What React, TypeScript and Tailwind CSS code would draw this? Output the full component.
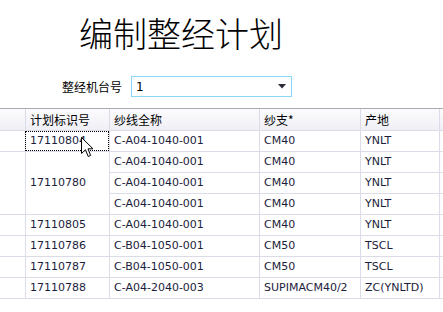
import React from "react";

type Group = { id: string; items: string[][] };

const groups: Group[] = [
  { id: "17110804", items: [["C-A04-1040-001", "CM40", "YNLT"]] },
  {
    id: "17110780",
    items: [
      ["C-A04-1040-001", "CM40", "YNLT"],
      ["C-A04-1040-001", "CM40", "YNLT"],
      ["C-A04-1040-001", "CM40", "YNLT"],
    ],
  },
  { id: "17110805", items: [["C-A04-1040-001", "CM40", "YNLT"]] },
  { id: "17110786", items: [["C-B04-1050-001", "CM50", "TSCL"]] },
  { id: "17110787", items: [["C-B04-1050-001", "CM50", "TSCL"]] },
  { id: "17110788", items: [["C-A04-2040-003", "SUPIMACM40/2", "ZC(YNLTD)"]] },
];

const cjk = "font-['Noto_Sans_CJK_SC',sans-serif]";
const latin = "font-['DejaVu_Sans','Noto_Sans_CJK_SC',sans-serif]";
const cell = "border-r border-b border-[#dcdce8] flex items-center pl-[4px] whitespace-nowrap overflow-hidden";

const Cursor = () => (
  <svg width="13" height="21" viewBox="0 0 13 21" className="absolute left-[55px] top-[6px]">
    <path d="M0.5 0.5 L0.5 16.5 L4.5 12.8 L7.2 19.5 L9.6 18.5 L7 11.8 L12 11.8 Z" fill="#fff" stroke="#000" strokeWidth="1" strokeLinejoin="miter" />
  </svg>
);

export default function App() {
  return (
    <div className="w-[443px] h-[312px] bg-white overflow-hidden text-black">
      {/* title */}
      <div className={`pt-[16px] pl-[79px] text-[34px] leading-[33px] font-light ${cjk}`}>编制整经计划</div>

      {/* machine no */}
      <div className="flex items-center mt-[27px] pl-[62px]">
        <span className={`text-[12px] ${cjk}`}>整经机台号</span>
        <div className="ml-[9px] w-[161px] h-[21px] border border-[#87d7f5] flex items-center justify-between pl-[4px] pr-[5px]">
          <span className={`text-[12px] ${latin}`}>1</span>
          <svg width="8" height="5" viewBox="0 0 8 5">
            <path d="M0 0 H8 L4 4.5 Z" fill="#2a2a3a" />
          </svg>
        </div>
      </div>

      {/* grid */}
      <div className="mt-[11px] border-t border-[#a8a8b0]">
        <div className="grid grid-cols-[26px_84px_150px_101px_79px_1fr] h-[22px] bg-linear-to-b from-[#fcfcfe] to-[#eeeef5] text-[12px]">
          <div className={cell}></div>
          <div className={`${cell} pl-[3px] ${cjk}`}>计划标识号</div>
          <div className={`${cell} ${cjk}`}>纱线全称</div>
          <div className={`${cell} ${cjk}`}>纱支*</div>
          <div className={`${cell} ${cjk}`}>产地</div>
          <div className={cell}></div>
        </div>
        <div className={`grid grid-cols-[26px_84px_150px_101px_79px_1fr] auto-rows-[21px] text-[11px] text-[#1c1c3c] ${latin}`}>
          {groups.map((g, gi) => {
            const span = g.items.length === 3 ? "row-span-3" : "";
            return (
              <React.Fragment key={g.id}>
                <div className={`${cell} ${span}`}></div>
                <div className={`${cell} ${span} pl-[3px] relative overflow-visible`}>
                  {g.id}
                  {gi === 0 && (
                    <>
                      <div className="absolute left-[-1px] top-0 right-0 bottom-0 border border-dotted border-black"></div>
                      <Cursor />
                    </>
                  )}
                </div>
                {g.items.map((it, ii) => (
                  <React.Fragment key={ii}>
                    <div className={cell}>{it[0]}</div>
                    <div className={cell}>{it[1]}</div>
                    <div className={cell}>{it[2]}</div>
                    <div className={cell}></div>
                  </React.Fragment>
                ))}
              </React.Fragment>
            );
          })}
        </div>
      </div>
    </div>
  );
}
